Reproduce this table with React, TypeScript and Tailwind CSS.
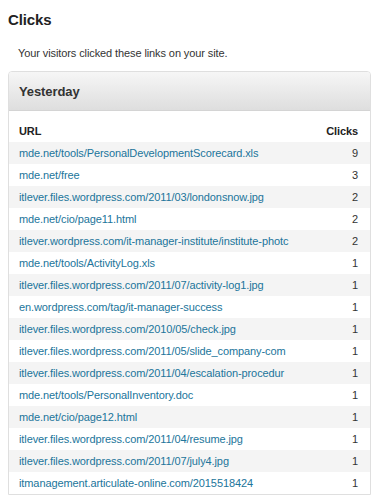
import React from "react";

interface ClickRow {
  url: string;
  clicks: number;
}

// Long paths are stored as the stats table lists them (already shortened).
const rows: ClickRow[] = [
  { url: "mde.net/tools/PersonalDevelopmentScorecard.xls", clicks: 9 },
  { url: "mde.net/free", clicks: 3 },
  { url: "itlever.files.wordpress.com/2011/03/londonsnow.jpg", clicks: 2 },
  { url: "mde.net/cio/page11.html", clicks: 2 },
  { url: "itlever.wordpress.com/it-manager-institute/institute-photc", clicks: 2 },
  { url: "mde.net/tools/ActivityLog.xls", clicks: 1 },
  { url: "itlever.files.wordpress.com/2011/07/activity-log1.jpg", clicks: 1 },
  { url: "en.wordpress.com/tag/it-manager-success", clicks: 1 },
  { url: "itlever.files.wordpress.com/2010/05/check.jpg", clicks: 1 },
  { url: "itlever.files.wordpress.com/2011/05/slide_company-com", clicks: 1 },
  { url: "itlever.files.wordpress.com/2011/04/escalation-procedur", clicks: 1 },
  { url: "mde.net/tools/PersonalInventory.doc", clicks: 1 },
  { url: "mde.net/cio/page12.html", clicks: 1 },
  { url: "itlever.files.wordpress.com/2011/04/resume.jpg", clicks: 1 },
  { url: "itlever.files.wordpress.com/2011/07/july4.jpg", clicks: 1 },
  { url: "itmanagement.articulate-online.com/2015518424", clicks: 1 },
];

function ClickItem({ row, shaded }: { row: ClickRow; shaded: boolean }) {
  return (
    <div
      className={`flex items-center h-[22px] pl-[10px] pr-[12px] ${
        shaded ? "bg-[#f4f4f4]" : "bg-white"
      }`}
    >
      <a
        href={`http://${row.url}`}
        className="w-[280px] overflow-hidden whitespace-nowrap text-[#21759b] no-underline"
      >
        {row.url}
      </a>
      <span className="flex-1 text-right text-[#333]">{row.clicks}</span>
    </div>
  );
}

export default function App() {
  return (
    <div
      className="bg-white text-[11px] text-[#333] tracking-[-0.1px] min-h-[496px]"
      style={{ fontFamily: '"Liberation Sans", Arial, sans-serif' }}
    >
      <h2 className="pl-2 pt-[11px] text-[15px] leading-[18px] font-bold text-[#222]">
        Clicks
      </h2>
      <p className="pl-[18px] mt-[17px] leading-[14px]">
        Your visitors clicked these links on your site.
      </p>

      <div className="ml-2 mt-[11px] w-[363px] border border-[#dfdfdf] rounded-t-[4px] overflow-hidden">
        <div className="h-[39px] flex items-center pl-[10px] bg-gradient-to-b from-[#f6f6f6] to-[#dedede] border-b border-[#d4d4d4]">
          <h3 className="text-[13px] font-bold text-[#333] mt-[2px]">Yesterday</h3>
        </div>

        <div className="pt-[9px]">
          <div className="flex items-center h-[22px] pl-[10px] pr-[12px] font-bold text-[#222]">
            <span className="w-[280px]">URL</span>
            <span className="flex-1 text-right">Clicks</span>
          </div>
          {rows.map((row, i) => (
            <ClickItem key={row.url} row={row} shaded={i % 2 === 0} />
          ))}
        </div>
      </div>
    </div>
  );
}
